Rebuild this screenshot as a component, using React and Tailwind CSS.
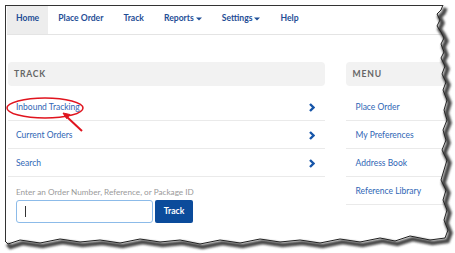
import React from "react";

const navItems = ["Home", "Place Order", "Track", "Reports", "Settings", "Help"];
const trackRows = ["Inbound Tracking", "Current Orders", "Search"];
const menuRows = ["Place Order", "My Preferences", "Address Book", "Reference Library"];

function Caret() {
  return (
    <svg width="6" height="4" viewBox="0 0 6 4" className="ml-[2px] inline-block">
      <path d="M0 0.5h6L3 3.5z" fill="#1f4e96" />
    </svg>
  );
}

function Chevron() {
  return (
    <svg width="6" height="9" viewBox="0 0 6 9">
      <path d="M1 1l3.5 3.5L1 8" fill="none" stroke="#1756a9" strokeWidth="2.4" />
    </svg>
  );
}

// torn right + bottom edge of the screenshot frame
const edge = [
  [443, 5], [441, 10], [437, 14], [440, 20], [437, 26], [441, 32], [444, 38], [441, 44],
  [444, 52], [441, 58], [445, 66], [442, 74], [446, 82], [443, 90], [447, 100], [444, 110],
  [447, 120], [443, 130], [446, 140], [442, 150], [447, 160], [444, 170], [441, 180],
  [446, 190], [443, 200], [447, 210], [444, 220], [448, 230], [445, 238],
  [430, 240], [410, 236], [395, 241], [380, 238], [360, 242], [340, 239], [320, 243],
  [300, 240], [280, 242], [260, 239], [240, 243], [220, 240], [200, 244], [180, 240],
  [160, 242], [140, 239], [120, 243], [100, 240], [80, 242], [60, 239], [40, 243],
  [20, 240], [8, 244], [5, 241],
];
const edgeLine = edge.map((p) => p.join(",")).join(" ");
const outside = `M0 0H455V253H0Z M5 5 L${edge.map((p) => p.join(" ")).join(" L")} Z`;

function TornEdge() {
  return (
    <svg width="455" height="253" className="absolute inset-0 pointer-events-none">
      <defs>
        <filter id="blur" x="-10%" y="-10%" width="120%" height="120%">
          <feGaussianBlur stdDeviation="1.3" />
        </filter>
      </defs>
      <path d={outside} fill="#fff" fillRule="evenodd" />
      <polyline
        points={edgeLine}
        fill="none"
        stroke="#4a4a4a"
        strokeWidth="4.5"
        transform="translate(2.5 3)"
        filter="url(#blur)"
      />
      <polyline points={edgeLine} fill="none" stroke="#222" strokeWidth="1" />
    </svg>
  );
}

export default function App() {
  return (
    <div className="relative w-[455px] h-[253px] overflow-hidden bg-white font-['Lato',sans-serif]">
      <div className="ml-[5px] mt-[5px] w-[460px] h-[245px] border-l border-t border-[#333]">
        <nav className="flex h-[29px] items-stretch border-b border-[#e4e4e4] ml-[1px] text-[8.6px] font-bold text-[#1f4e96]">
          {navItems.map((item, i) => (
            <div
              key={item}
              className={`flex items-center pb-[3px] ${i === 0 ? "bg-[#ededed] px-[9px]" : "px-[10px]"}`}
            >
              {item}
              {(item === "Reports" || item === "Settings") && <Caret />}
            </div>
          ))}
        </nav>

        <div className="flex pt-[27px] pl-[2px]">
          <section className="w-[318px]">
            <div className="h-[24px] rounded-[4px] bg-[#f2f2f2] flex items-center pl-[6px] text-[8.6px] font-bold tracking-[0.8px] text-[#666]">
              TRACK
            </div>
            <ul className="mt-[7px]">
              {trackRows.map((row) => (
                <li
                  key={row}
                  className="h-[28px] flex items-center justify-between pl-[8px] pr-[10px] pt-[1px] border-b border-[#eaeaea] text-[8.5px] text-[#2f66b5]"
                >
                  {row}
                  <Chevron />
                </li>
              ))}
            </ul>
            <div className="pl-[8px] pt-[9px]">
              <p className="text-[8.2px] text-[#9a9a9a] leading-[12px]">
                Enter an Order Number, Reference, or Package ID
              </p>
              <div className="flex gap-[2px] mt-[2px]">
                <div className="w-[137px] h-[23px] rounded-[3px] border border-[#8cbbe9] flex items-center pl-[8px]">
                  <span className="w-px h-[11px] bg-[#333]" />
                </div>
                <button className="w-[38px] h-[23px] rounded-[2px] bg-[#0b4b9b] text-white text-[8.6px] font-bold">
                  Track
                </button>
              </div>
            </div>
          </section>

          <section className="ml-[21px] w-[120px]">
            <div className="h-[24px] rounded-[4px] bg-[#f2f2f2] flex items-center pl-[7px] text-[8.6px] font-bold tracking-[0.8px] text-[#666]">
              MENU
            </div>
            <ul className="mt-[7px]">
              {menuRows.map((row) => (
                <li
                  key={row}
                  className="h-[28px] flex items-center pl-[10px] pt-[1px] border-b border-[#eaeaea] text-[8.5px] text-[#2f66b5]"
                >
                  {row}
                </li>
              ))}
            </ul>
          </section>
        </div>
      </div>

      {/* callout annotation */}
      <svg width="455" height="253" className="absolute inset-0 pointer-events-none">
        <ellipse cx="45" cy="108" rx="38" ry="10" fill="none" stroke="#e0141e" strokeWidth="1.5" />
        <line x1="82" y1="131" x2="67" y2="117" stroke="#e0141e" strokeWidth="2" />
        <path d="M63 113l7 1.5-3.5 4z" fill="#e0141e" stroke="#e0141e" strokeWidth="1" />
      </svg>

      <TornEdge />
    </div>
  );
}
